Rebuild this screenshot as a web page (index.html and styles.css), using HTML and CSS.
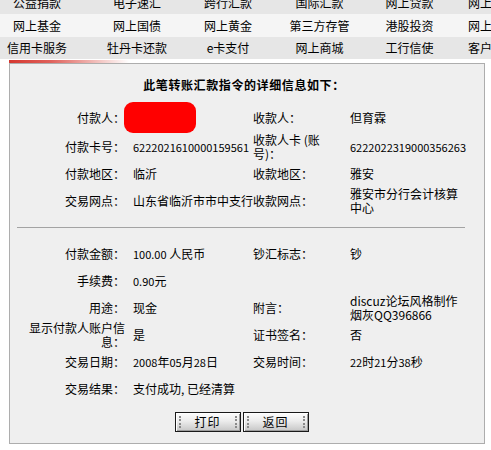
FILE: index.html
```html
<!DOCTYPE html>
<html lang="zh-CN">
<head>
<meta charset="utf-8">
<title>转账汇款详细信息</title>
<link rel="stylesheet" href="styles.css">
</head>
<body>
<nav class="menu">
  <div class="menu-row dark">
    <a>公益捐款</a><a>电子速汇</a><a>跨行汇款</a><a>国际汇款</a><a>网上贷款</a><a>网上保险</a>
  </div>
  <div class="menu-row light">
    <a>网上基金</a><a>网上国债</a><a>网上黄金</a><a>第三方存管</a><a>港股投资</a><a>网上外汇</a>
  </div>
  <div class="menu-row dark last">
    <a>信用卡服务</a><a>牡丹卡还款</a><a>e卡支付</a><a>网上商城</a><a>工行信使</a><a>客户服务</a>
  </div>
</nav>
<div class="accent"></div>
<section class="panel">
  <h1 class="title">此笔转账汇款指令的详细信息如下：</h1>
  <div class="info first">
    <div class="lbl">付款人：</div>
    <div class="val"><span class="redact"></span></div>
    <div class="lbl2">收款人：</div>
    <div class="val2">但育霖</div>

    <div class="lbl">付款卡号：</div>
    <div class="val num">6222021610000159561</div>
    <div class="lbl2">收款人卡 (账号)：</div>
    <div class="val2 num">6222022319000356263</div>

    <div class="lbl">付款地区：</div>
    <div class="val">临沂</div>
    <div class="lbl2">收款地区：</div>
    <div class="val2">雅安</div>

    <div class="lbl">交易网点：</div>
    <div class="val nowrap">山东省临沂市市中支行</div>
    <div class="lbl2">收款网点：</div>
    <div class="val2">雅安市分行会计核算中心</div>
  </div>
  <hr class="sep">
  <div class="info">
    <div class="lbl">付款金额：</div>
    <div class="val"><span class="num">100.00</span> 人民币</div>
    <div class="lbl2">钞汇标志：</div>
    <div class="val2">钞</div>

    <div class="lbl">手续费：</div>
    <div class="val"><span class="num">0.90</span>元</div>
    <div class="lbl2"></div>
    <div class="val2"></div>

    <div class="lbl">用途：</div>
    <div class="val">现金</div>
    <div class="lbl2">附言：</div>
    <div class="val2">discuz论坛风格制作烟灰QQ396866</div>

    <div class="lbl">显示付款人账户信息：</div>
    <div class="val">是</div>
    <div class="lbl2">证书签名：</div>
    <div class="val2">否</div>

    <div class="lbl">交易日期：</div>
    <div class="val"><span class="num">2008</span>年<span class="num">05</span>月<span class="num">28</span>日</div>
    <div class="lbl2">交易时间：</div>
    <div class="val2"><span class="num">22</span>时<span class="num">21</span>分<span class="num">38</span>秒</div>

    <div class="lbl">交易结果：</div>
    <div class="val">支付成功, 已经清算</div>
    <div class="lbl2"></div>
    <div class="val2"></div>
  </div>
  <div class="actions">
    <button class="btn" type="button">打印</button>
    <button class="btn" type="button">返回</button>
  </div>
</section>
</body>
</html>
```
FILE: styles.css
```css
html, body {
  margin: 0;
  padding: 0;
  background: #fff;
}
body {
  font-family: "Noto Sans CJK SC", "Liberation Sans", sans-serif;
  font-size: 12px;
  color: #000;
  overflow: hidden;
}

/* top menu */
.menu {
  margin-top: -9px;
}
.menu-row {
  display: grid;
  grid-template-columns: 74px 126px 56px 127px 53px 1fr;
  height: 23px;
  align-items: center;
  white-space: nowrap;
  overflow: hidden;
}
.menu-row.dark { background: #e6e6e6; }
.menu-row.light { background: #f5f5f5; }
.menu-row.last {
  height: 22px;
  margin-bottom: 1px;
}
.menu-row a {
  text-align: center;
  line-height: 14px;
  color: #000;
}
.menu-row a:last-child {
  text-align: left;
  padding-left: 32px;
}

/* accent strip */
.accent {
  margin-left: 9px;
  width: 120px;
  height: 3px;
  background: linear-gradient(to right, #d5372f, #e0625c 35%, #f3c4c1 75%, #ffffff);
}

/* panel */
.panel {
  margin: 0 6px 0 9px;
  border: 1px solid #adadad;
  background: #efefef;
  padding: 14px 0 11px;
}
.title {
  margin: 0 0 10px;
  padding-right: 6px;
  font-size: 12px;
  line-height: 14px;
  font-weight: bold;
  letter-spacing: 0.6px;
  text-align: center;
}

.info {
  display: grid;
  grid-template-columns: 96px 112px 89px 115px;
  grid-auto-rows: 27px;
  column-gap: 8px;
  align-items: center;
  width: 436px;
  margin: 0 auto;
  line-height: 14px;
}
.info.first {
  grid-template-rows: 31px;
}
.lbl {
  text-align: right;
}
.lbl2 {
  padding-right: 13px;
}
.num {
  font-size: 11px;
}
.nowrap {
  white-space: nowrap;
}
.redact {
  display: block;
  width: 72px;
  height: 31px;
  margin-left: -9px;
  background: #ff0000;
  border-radius: 9px;
}

.sep {
  border: 0;
  border-top: 1px solid #a3a3a3;
  height: 0;
  margin: 13px 19px 12px 7px;
}

.actions {
  display: flex;
  justify-content: center;
  gap: 2px;
  margin-top: 10px;
  padding-right: 11px;
}
.btn {
  position: relative;
  width: 66px;
  height: 20px;
  padding: 0;
  border: 1px solid #1a1a1a;
  background: linear-gradient(#fdfdfd, #ececec 45%, #c6c6c6);
  box-shadow: inset 1px 1px 0 #fff, inset -1px -1px 0 #9c9c9c;
  font-family: "Noto Sans CJK SC", sans-serif;
  font-size: 12px;
  line-height: 18px;
  letter-spacing: 1px;
  color: #000;
}
.btn::before,
.btn::after {
  content: "";
  position: absolute;
  top: 3px;
  bottom: 3px;
  border-left: 2px dotted #8a8a8a;
}
.btn::before { left: 3px; }
.btn::after { right: 3px; }
```
